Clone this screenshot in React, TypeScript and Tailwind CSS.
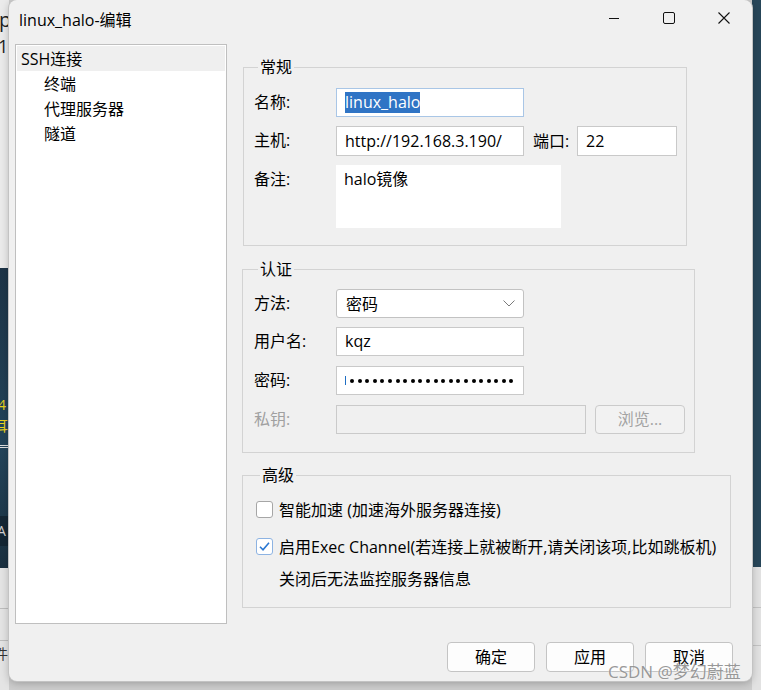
import React from 'react'

// Shared font stack: humanist Latin + CJK fallback
const FONT = "font-['Open_Sans','Noto_Sans_CJK_SC',sans-serif]"

const Group = ({
  title,
  className,
  children,
}: {
  title: string
  className: string
  children: React.ReactNode
}) => (
  <fieldset className={`border border-[#d3d3d3] ${className}`}>
    <legend className="ml-[4px] px-[2px] leading-[20px] text-[16px] text-black">{title}</legend>
    {children}
  </fieldset>
)

const Label = ({ children, disabled }: { children: React.ReactNode; disabled?: boolean }) => (
  <span className={`w-[82px] shrink-0 leading-[29px] ${disabled ? 'text-[#a0a0a0]' : 'text-black'}`}>
    {children}
  </span>
)

const CheckBox = ({ checked }: { checked?: boolean }) => (
  <span
    className={`w-[17px] h-[17px] shrink-0 rounded-[3px] border bg-white flex items-center justify-center ${
      checked ? 'border-[#8db3e2]' : 'border-[#a6a6a6]'
    }`}
  >
    {checked && (
      <svg width="13" height="13" viewBox="0 0 13 13" fill="none">
        <path d="M2 6.8 L5 9.8 L11 2.8" stroke="#2a77d2" strokeWidth="1.6" />
      </svg>
    )}
  </span>
)

const DialogButton = ({ children }: { children: React.ReactNode }) => (
  <button className="w-[88px] h-[30px] rounded-[4px] border border-[#c4c4c4] bg-[#fdfdfd] text-[16px] leading-[28px] text-black">
    {children}
  </button>
)

const App = () => {
  return (
    <div className={`relative w-[761px] h-[690px] overflow-hidden bg-[#cdcdcd] ${FONT}`}>
      {/* Background windows */}
      <div className="absolute left-0 top-0 w-[9px] h-[690px] flex flex-col overflow-hidden">
        <div className="h-[268px] bg-[#ebebeb] text-[20px] leading-[26px] text-[#222]">
          <div className="mt-[7px] -ml-[1px]">p</div>
          <div className="-ml-[2px] text-[18px]">1</div>
        </div>
        <div className="h-[300px] bg-[linear-gradient(180deg,#1d3447,#23445a_60%,#1a3040)] text-[14px] leading-[18px]">
          <div className="mt-[128px] text-[#e8d21c] -ml-[2px]">4</div>
          <div className="mt-[3px] text-[#e8d21c] -ml-[6px]">耳</div>
          <div className="mt-[10px] h-[3px] border-y border-[#e0e0e0]" />
          <div className="mt-[68px] h-[30px] bg-[#142634] text-[#cfcfcf] leading-[30px] -ml-[3px]">A</div>
        </div>
        <div className="flex-1 bg-[#e4e4e4]">
          <div className="mt-[40px] border-t border-[#bdbdbd]" />
          <div className="mt-[31px] border-t border-[#bdbdbd]" />
          <div className="mt-[4px] text-[14px] leading-[18px] -ml-[6px] text-[#333]">件</div>
        </div>
      </div>
      <div className="absolute left-[752px] top-0 w-[9px] h-[690px] flex flex-col">
        <div className="h-[567px] bg-[#274659]" />
        <div className="flex-1 bg-[#e2e2e2]">
          <div className="mt-[40px] border-t border-[#c4c4c4]" />
          <div className="mt-[37px] border-t border-[#c4c4c4]" />
        </div>
      </div>

      {/* Dialog window */}
      <div className="absolute left-[9px] top-0 w-[743px] h-[681px] rounded-[8px] bg-[#f0f0f0] ring-1 ring-[#c3c3c3] shadow-[0_2px_8px_rgba(0,0,0,0.25)] flex flex-col text-[16px] text-black">
        {/* Title bar */}
        <div className="h-[40px] flex items-start">
          <span className="ml-[10px] mt-[9px] leading-[22px] text-[16px]">linux_halo-编辑</span>
          <div className="ml-auto mr-[1px] flex">
            <div className="w-[55px] h-[36px] flex items-center justify-center">
              <svg width="12" height="12" viewBox="0 0 12 12">
                <path d="M1 6.5 H11" stroke="#111" strokeWidth="1" />
              </svg>
            </div>
            <div className="w-[55px] h-[36px] flex items-center justify-center">
              <svg width="12" height="12" viewBox="0 0 12 12" fill="none">
                <rect x="0.5" y="0.5" width="11" height="11" rx="1.5" stroke="#111" strokeWidth="1" />
              </svg>
            </div>
            <div className="w-[55px] h-[36px] flex items-center justify-center">
              <svg width="12" height="12" viewBox="0 0 12 12" fill="none">
                <path d="M0.5 0.5 L11.5 11.5 M11.5 0.5 L0.5 11.5" stroke="#111" strokeWidth="1.1" />
              </svg>
            </div>
          </div>
        </div>

        {/* Body */}
        <div className="mt-[4px] flex">
          {/* Tree */}
          <div className="ml-[6px] w-[212px] h-[580px] border border-[#bfbfbf] bg-white p-[1px]">
            <div className="h-[25px] pt-[1px] leading-[24px] pl-[4px] bg-[#efefef]">SSH连接</div>
            <div className="h-[25px] pt-[1px] leading-[24px] pl-[27px]">终端</div>
            <div className="h-[25px] pt-[1px] leading-[24px] pl-[27px]">代理服务器</div>
            <div className="h-[25px] pt-[1px] leading-[24px] pl-[27px]">隧道</div>
          </div>

          {/* Settings */}
          <div className="ml-[15px] flex flex-col">
            <Group title="常规" className="mt-[13px] ml-[1px] w-[444px] pl-[10px] pb-[17px]">
              <div className="mt-[11px] flex items-start">
                <Label>名称:</Label>
                <div className="w-[188px] h-[29px] border border-[#a9c6e6] bg-white pl-[8px] flex items-center">
                  <span className="h-[21px] leading-[21px] bg-[#2f74c5] text-white">linux_halo</span>
                </div>
              </div>
              <div className="mt-[9px] flex items-start">
                <Label>主机:</Label>
                <div className="w-[188px] h-[30px] border border-[#c9c9c9] bg-white pl-[8px] leading-[28px]">
                  http://192.168.3.190/
                </div>
                <span className="ml-[9px] w-[44px] leading-[30px]">端口:</span>
                <div className="w-[100px] h-[30px] border border-[#c9c9c9] bg-white pl-[8px] leading-[28px]">22</div>
              </div>
              <div className="mt-[9px] flex items-start">
                <Label>备注:</Label>
                <div className="w-[225px] h-[63px] bg-white pl-[8px] pt-[4px] leading-[20px]">halo镜像</div>
              </div>
            </Group>

            <Group title="认证" className="mt-[13px] w-[453px] pl-[11px] pb-[18px]">
              <div className="mt-[10px] flex items-start">
                <Label>方法:</Label>
                <div className="w-[188px] h-[29px] rounded-[3px] border border-[#c2c2c2] bg-white pl-[9px] pr-[8px] flex items-center justify-between">
                  <span className="leading-[27px] pt-[1px]">密码</span>
                  <svg width="12" height="7" viewBox="0 0 12 7" fill="none">
                    <path d="M0.5 0.5 L6 6 L11.5 0.5" stroke="#7a7a7a" strokeWidth="1" />
                  </svg>
                </div>
              </div>
              <div className="mt-[9px] flex items-start">
                <Label>用户名:</Label>
                <div className="w-[188px] h-[29px] border border-[#c9c9c9] bg-white pl-[8px] leading-[27px]">kqz</div>
              </div>
              <div className="mt-[10px] flex items-start">
                <Label>密码:</Label>
                <div className="w-[188px] h-[29px] border border-[#c9c9c9] bg-white pl-[8px] flex items-center">
                  <span className="w-[1px] h-[9px] bg-[#1f6fc4] mr-[4px]" />
                  <div className="flex gap-[3.6px]">
                    {Array.from({ length: 22 }).map((_, i) => (
                      <span key={i} className="w-[4px] h-[4px] rounded-full bg-black" />
                    ))}
                  </div>
                </div>
              </div>
              <div className="mt-[10px] flex items-start">
                <Label disabled>私钥:</Label>
                <div className="w-[250px] h-[29px] border border-[#cacaca] bg-[#f0f0f0]" />
                <button className="ml-[9px] w-[90px] h-[29px] rounded-[4px] border border-[#cbcbcb] bg-[#f2f2f2] text-[#a3a3a3] leading-[27px]">
                  浏览...
                </button>
              </div>
            </Group>

            <Group title="高级" className="mt-[12px] w-[489px] pl-[13px] pb-[13px]">
              <div className="mt-[10px] h-[29px] flex items-center gap-[6px]">
                <CheckBox />
                <span>智能加速 (加速海外服务器连接)</span>
              </div>
              <div className="mt-[8px] h-[29px] flex items-center gap-[6px]">
                <CheckBox checked />
                <span>启用Exec Channel(若连接上就被断开,请关闭该项,比如跳板机)</span>
              </div>
              <div className="mt-[4px] h-[29px] leading-[29px] pl-[23px]">关闭后无法监控服务器信息</div>
            </Group>
          </div>
        </div>

        {/* Footer buttons */}
        <div className="mt-[18px] mr-[19px] flex justify-end gap-[11px]">
          <DialogButton>确定</DialogButton>
          <DialogButton>应用</DialogButton>
          <DialogButton>取消</DialogButton>
        </div>
      </div>

      {/* Watermark */}
      <div className="absolute left-[608px] top-[661px] text-[17px] leading-[22px] text-[#8f8f8f] opacity-90 [text-shadow:0_0_2px_#ffffff]">
        CSDN @梦幻蔚蓝
      </div>
    </div>
  )
}

export default App
